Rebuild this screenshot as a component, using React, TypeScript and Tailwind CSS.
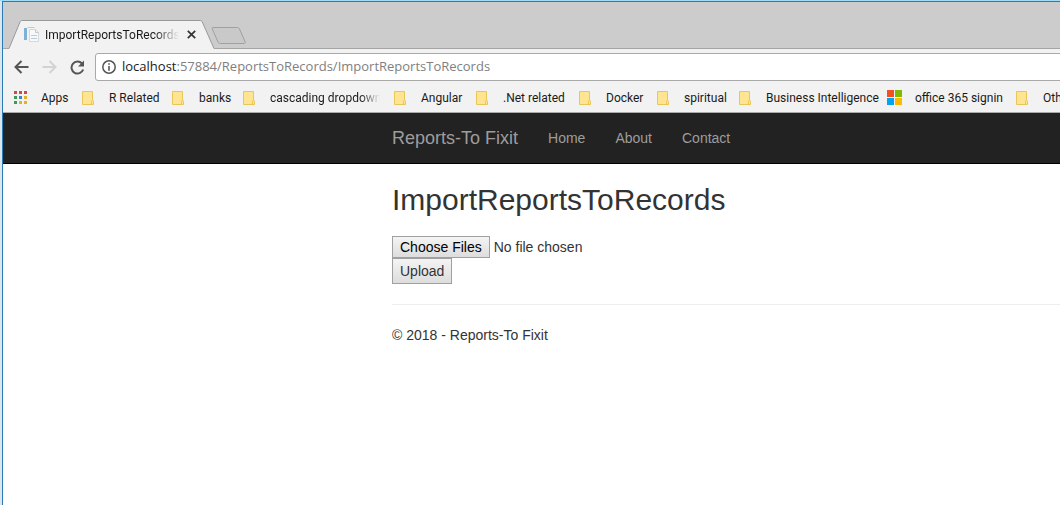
import React from "react";

type Bookmark = { label: string; icon: "apps" | "folder" | "windows"; width: string; clipped?: boolean };

const bookmarks: Bookmark[] = [
  { label: "Apps", icon: "apps", width: "w-[68px]" },
  { label: "R Related", icon: "folder", width: "w-[90px]" },
  { label: "banks", icon: "folder", width: "w-[71px]" },
  { label: "cascading dropdowns", icon: "folder", width: "w-[151px]", clipped: true },
  { label: "Angular", icon: "folder", width: "w-[82px]" },
  { label: ".Net related", icon: "folder", width: "w-[103px]" },
  { label: "Docker", icon: "folder", width: "w-[78px]" },
  { label: "spiritual", icon: "folder", width: "w-[82px]" },
  { label: "Business Intelligence", icon: "folder", width: "w-[148px]" },
  { label: "office 365 signin", icon: "windows", width: "w-[129px]" },
  { label: "Other bookmarks", icon: "folder", width: "w-[130px]" },
];

const navLinks = ["Home", "About", "Contact"];

const appColors = ["#d04a4a", "#d04a4a", "#d04a4a", "#3c9a56", "#3c82d0", "#e3b02c", "#3c9a56", "#e3b02c", "#e3b02c"];

function BookmarkIcon({ kind }: { kind: Bookmark["icon"] }) {
  if (kind === "apps") {
    return (
      <svg width="13" height="13" viewBox="0 0 13 13" aria-hidden="true">
        {appColors.map((color, i) => (
          <rect key={i} x={(i % 3) * 5} y={Math.floor(i / 3) * 5} width="3" height="3" fill={color} />
        ))}
      </svg>
    );
  }
  if (kind === "windows") {
    return (
      <svg width="15" height="15" viewBox="0 0 15 15" aria-hidden="true">
        <rect width="7" height="7" fill="#f25022" />
        <rect x="8" width="7" height="7" fill="#7fba00" />
        <rect y="8" width="7" height="7" fill="#00a4ef" />
        <rect x="8" y="8" width="7" height="7" fill="#ffb900" />
      </svg>
    );
  }
  return (
    <svg width="12" height="14" viewBox="0 0 12 14" aria-hidden="true">
      <path d="M.5.5h10v8l1 2v3H.5z" fill="#ffe591" stroke="#e8c65a" />
      <path d="M9.5 13.5v-3l1-2" fill="none" stroke="#e8c65a" />
    </svg>
  );
}

function TabStrip() {
  return (
    <div className="flex h-[47px] items-end border-b border-[#a5a5a5] bg-[#cccccc] pl-[6px]">
      <div className="relative -mb-px h-[29px] w-[206px]">
        <svg className="absolute inset-0" width="206" height="29" viewBox="0 0 206 29" aria-hidden="true">
          <path d="M0 28.500L11 2c.5-1 1-1.500 2-1.500h178c1.200 0 1.800.5 2.300 1.500L205 28.500V29H0z" fill="#f2f2f2" />
          <path d="M0 28.500L11 2c.5-1 1-1.500 2-1.500h178c1.200 0 1.800.5 2.300 1.500L205 28.500" fill="none" stroke="#999999" />
        </svg>
        <div className="relative flex h-full items-center pl-[15px]">
          <svg width="16" height="16" viewBox="0 0 16 16" aria-hidden="true">
            <path d="M0 1h3v12H0z" fill="#7db1d6" />
            <path d="M5.500 2.500h6l3 3v9h-9z" fill="#f6f8fa" stroke="#d3d9df" />
            <path d="M3.500.5h7M11.500 2.500v3h3M7 8.500h6M7 11.500h6" fill="none" stroke="#bccbd8" />
          </svg>
          <span className="ml-[5px] w-[134px] overflow-hidden whitespace-nowrap text-[12px] text-[#1a1a1a] [mask-image:linear-gradient(to_right,black_82%,transparent)]">
            ImportReportsToRecords
          </span>
          <button type="button" aria-label="Close tab" className="ml-[8px]">
            <svg width="9" height="9" viewBox="0 0 9 9" aria-hidden="true">
              <path d="M.8.8l7.400 7.400M8.200.8L.8 8.200" stroke="#333333" strokeWidth="1.700" />
            </svg>
          </button>
        </div>
      </div>
      <button type="button" aria-label="New tab" className="mb-[4px] -ml-[4px]">
        <svg width="36" height="17" viewBox="0 0 36 17" aria-hidden="true">
          <path d="M2 .5h24.500c1 0 1.500.5 2 1.500l5.700 13c.3 1 0 1.500-1 1.500H9.500c-1.200 0-2-.5-2.500-1.500L1.300 2C1 1 1.200.5 2 .5z" fill="#c9c9c9" stroke="#a0a0a0" />
        </svg>
      </button>
    </div>
  );
}

function Toolbar() {
  return (
    <div className="flex h-8 items-end pl-[11px]">
      <div className="flex h-[28px] items-center gap-[13px]">
        <button type="button" aria-label="Back">
          <svg width="15" height="14" viewBox="0 0 15 14" aria-hidden="true">
            <path d="M14.500 7H1.500M7.500 1l-6 6 6 6" fill="none" stroke="#555555" strokeWidth="2" />
          </svg>
        </button>
        <button type="button" aria-label="Forward" disabled>
          <svg width="15" height="14" viewBox="0 0 15 14" aria-hidden="true">
            <path d="M.5 7h13M7.500 1l6 6-6 6" fill="none" stroke="#d3d3d3" strokeWidth="2" />
          </svg>
        </button>
        <button type="button" aria-label="Reload">
          <svg width="15" height="15" viewBox="0 0 15 15" aria-hidden="true">
            <path d="M12 3.500A6 6 0 1 0 13.200 9.500" fill="none" stroke="#555555" strokeWidth="2" />
            <path d="M14 .5v6H8z" fill="#555555" />
          </svg>
        </button>
      </div>
      <div className="-mr-1 ml-[10px] flex h-[28px] flex-1 items-center rounded-[3px] border border-[#a9a9a9] bg-white pl-[6px]">
        <svg width="14" height="14" viewBox="0 0 14 14" aria-hidden="true">
          <circle cx="7" cy="7" r="6.200" fill="none" stroke="#555555" strokeWidth="1.500" />
          <path d="M6.200 3.200h1.600v1.600H6.200zM6.200 6h1.600v4.800H6.200z" fill="#555555" />
        </svg>
        <a href="#address" aria-label="Address" className="ml-[6px] whitespace-nowrap text-[13px] text-[#808080]">
          <span className="text-[#1a1a1a]">localhost</span>:57884/ReportsToRecords/ImportReportsToRecords
        </a>
      </div>
    </div>
  );
}

function BookmarksBar() {
  return (
    <div className="flex h-8 items-center overflow-hidden border-b border-[#a9a9a9] pl-[11px] pt-[2px]">
      {bookmarks.map((item) => (
        <a key={item.label} href="#bookmark" className={`flex shrink-0 items-center text-[12px] text-[#1a1a1a] ${item.width}`}>
          <span className={`flex shrink-0 ${item.icon === "windows" ? "w-[28px]" : "w-[27px]"}`}>
            <BookmarkIcon kind={item.icon} />
          </span>
          <span
            className={
              item.clipped
                ? "w-[110px] overflow-hidden whitespace-nowrap [mask-image:linear-gradient(to_right,black_82%,transparent)]"
                : "whitespace-nowrap"
            }
          >
            {item.label}
          </span>
        </a>
      ))}
    </div>
  );
}

function Site() {
  return (
    <div className="font-['Liberation_Sans',Arial,sans-serif] text-[14px] leading-5 text-[#333333]">
      <nav className="flex h-[51px] items-center border-b border-black bg-[#222222] pl-[389px] text-[#9d9d9d]">
        <a href="#top" className="pr-[15px] text-[18px]">
          Reports-To Fixit
        </a>
        {navLinks.map((link) => (
          <a key={link} href={`#${link.toLowerCase()}`} className="px-[15px]">
            {link}
          </a>
        ))}
      </nav>
      <main className="pl-[389px] pt-[19px]">
        <h2 className="text-[30px] leading-[33px]">ImportReportsToRecords</h2>
        <form className="mt-5" onSubmit={(e) => e.preventDefault()}>
          <input
            type="file"
            multiple
            aria-label="Files to import"
            className="block h-[22px] w-[300px] file:mr-1 file:h-[22px] file:border file:border-solid file:border-[#a0a0a0] file:bg-linear-to-b file:from-[#f4f4f4] file:to-[#dddddd] file:px-[7px] file:text-black"
          />
          <button type="submit" className="block h-[26px] border border-[#a0a0a0] bg-linear-to-b from-[#f4f4f4] to-[#dddddd] px-[7px]">
            Upload
          </button>
        </form>
        <hr className="my-5 border-[#eeeeee]" />
        <footer>
          <p>© 2018 - Reports-To Fixit</p>
        </footer>
      </main>
    </div>
  );
}

export default function App() {
  return (
    <div className="min-h-screen overflow-hidden border-t border-[#9fdcf7] bg-[#dfe6ea] pl-[2px]">
      <div className="min-h-screen border-l border-t border-[#2a7ab8] bg-white">
        <header className="bg-[#f2f2f2] font-[Roboto,'Noto_Sans',sans-serif]">
          <TabStrip />
          <div className="font-['Open_Sans','Noto_Sans',sans-serif]">
            <Toolbar />
          </div>
          <BookmarksBar />
        </header>
        <Site />
      </div>
    </div>
  );
}
